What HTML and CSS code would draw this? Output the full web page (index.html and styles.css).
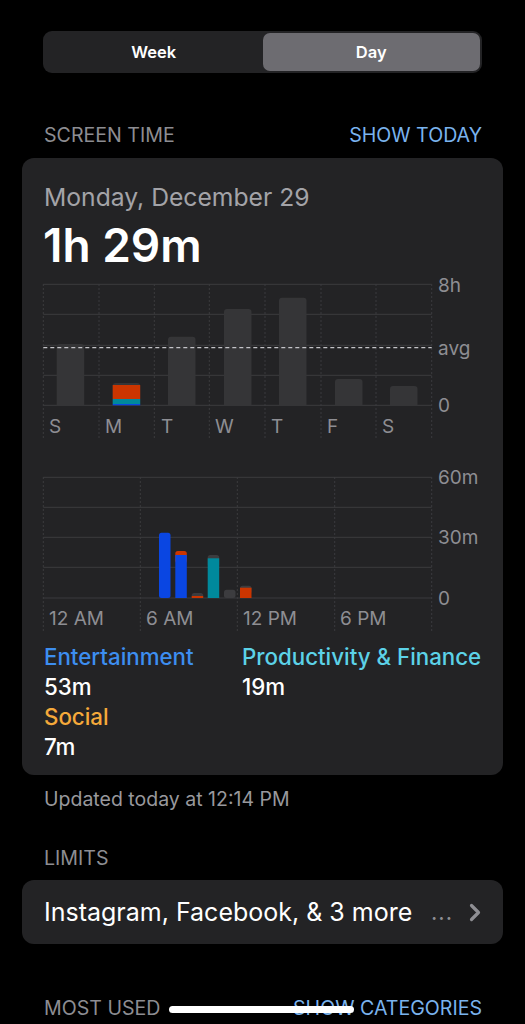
FILE: index.html
```html
<!DOCTYPE html>
<html lang="en">
<head>
  <meta charset="UTF-8">
  <title>Screen Time</title>
  <link rel="stylesheet" href="styles.css">
</head>
<body>

<div class="page">
  <div class="segmented">
    <div class="segment">Week</div>
    <div class="segment active">Day</div>
  </div>

  <div class="section-head">
    <span>SCREEN TIME</span>
    <span class="link">SHOW TODAY</span>
  </div>

  <div class="card">
    <div class="date">Monday, December 29</div>
    <div class="total">1h 29m</div>

    <svg class="chart week" width="481" height="170" viewBox="0 0 481 170">
      <g class="grid">
        <line x1="21.3" y1="14.3" x2="409.7" y2="14.3"/>
        <line x1="21.3" y1="44.3" x2="409.7" y2="44.3"/>
        <line x1="21.3" y1="75.3" x2="409.7" y2="75.3"/>
        <line x1="21.3" y1="105.3" x2="409.7" y2="105.3"/>
        <line x1="21.3" y1="135.3" x2="409.7" y2="135.3"/>
      </g>
      <g class="dots">
        <line x1="21.3" y1="14" x2="21.3" y2="168"/>
        <line x1="77" y1="14" x2="77" y2="168"/>
        <line x1="132.3" y1="14" x2="132.3" y2="168"/>
        <line x1="187.3" y1="14" x2="187.3" y2="168"/>
        <line x1="243" y1="14" x2="243" y2="168"/>
        <line x1="299" y1="14" x2="299" y2="168"/>
        <line x1="354" y1="14" x2="354" y2="168"/>
        <line x1="409.7" y1="14" x2="409.7" y2="168"/>
      </g>
      <g class="bars">
        <path d="M34.7 135.3 V77 a3 3 0 0 1 3 -3 h21.5 a3 3 0 0 1 3 3 V135.3 Z"/>
        <path d="M90.7 135.3 V116 a3 3 0 0 1 3 -3 h21.5 a3 3 0 0 1 3 3 V135.3 Z"/>
        <path d="M146 135.3 V69.7 a3 3 0 0 1 3 -3 h21.5 a3 3 0 0 1 3 3 V135.3 Z"/>
        <path d="M202 135.3 V42 a3 3 0 0 1 3 -3 h21.5 a3 3 0 0 1 3 3 V135.3 Z"/>
        <path d="M257 135.3 V30.7 a3 3 0 0 1 3 -3 h21.5 a3 3 0 0 1 3 3 V135.3 Z"/>
        <path d="M313 135.3 V112 a3 3 0 0 1 3 -3 h21.5 a3 3 0 0 1 3 3 V135.3 Z"/>
        <path d="M368 135.3 V119 a3 3 0 0 1 3 -3 h21.5 a3 3 0 0 1 3 3 V135.3 Z"/>
      </g>
      <rect class="red" x="90.7" y="115" width="27.5" height="14"/>
      <rect class="teal" x="90.7" y="129" width="27.5" height="5"/>
      <rect class="blue" x="90.7" y="134" width="27.5" height="1.3"/>
      <line class="avg" x1="21.3" y1="77.7" x2="409.7" y2="77.7"/>
      <g class="axis">
        <text x="416" y="22">8h</text>
        <text x="416" y="85">avg</text>
        <text x="416" y="142">0</text>
        <text x="27" y="163">S</text>
        <text x="83" y="163">M</text>
        <text x="139" y="163">T</text>
        <text x="193" y="163">W</text>
        <text x="249" y="163">T</text>
        <text x="305" y="163">F</text>
        <text x="360" y="163">S</text>
      </g>
    </svg>

    <svg class="chart day" width="481" height="170" viewBox="0 0 481 170">
      <g class="grid">
        <line x1="21.3" y1="12.3" x2="409.7" y2="12.3"/>
        <line x1="21.3" y1="42.3" x2="409.7" y2="42.3"/>
        <line x1="21.3" y1="72.3" x2="409.7" y2="72.3"/>
        <line x1="21.3" y1="102.3" x2="409.7" y2="102.3"/>
        <line x1="21.3" y1="133" x2="409.7" y2="133"/>
      </g>
      <g class="dots">
        <line x1="21.3" y1="12" x2="21.3" y2="168"/>
        <line x1="118.3" y1="12" x2="118.3" y2="168"/>
        <line x1="215.3" y1="12" x2="215.3" y2="168"/>
        <line x1="312.7" y1="12" x2="312.7" y2="168"/>
        <line x1="409.7" y1="12" x2="409.7" y2="168"/>
      </g>
      <!-- hourly bars, 07:00 to 12:00 -->
      <rect class="blue" x="137" y="67.7" width="11.5" height="65.3" rx="2.5"/>
      <rect class="red" x="153.3" y="86" width="11.5" height="12" rx="2.5"/>
      <rect class="blue" x="153.3" y="90" width="11.5" height="43"/>
      <rect class="gray" x="169.7" y="128" width="11.5" height="5" rx="2.5"/>
      <rect class="red" x="169.7" y="131" width="11.5" height="2"/>
      <rect class="gray" x="185.7" y="90" width="11.5" height="12" rx="2.5"/>
      <rect class="teal" x="185.7" y="93.3" width="11.5" height="39.7"/>
      <rect class="gray" x="202" y="124.7" width="11.5" height="8.3" rx="2.5"/>
      <rect class="gray" x="218" y="120.7" width="11.5" height="8" rx="2.5"/>
      <rect class="red" x="218" y="122.7" width="11.5" height="10.3"/>
      <g class="axis">
        <text x="416" y="19">60m</text>
        <text x="416" y="79">30m</text>
        <text x="416" y="140">0</text>
        <text x="27" y="160">12 AM</text>
        <text x="124" y="160">6 AM</text>
        <text x="221" y="160">12 PM</text>
        <text x="318" y="160">6 PM</text>
      </g>
    </svg>

    <div class="legend">
      <div>
        <div class="cat ent">Entertainment</div>
        <div class="amount">53m</div>
      </div>
      <div>
        <div class="cat prod">Productivity &amp; Finance</div>
        <div class="amount">19m</div>
      </div>
      <div>
        <div class="cat soc">Social</div>
        <div class="amount">7m</div>
      </div>
    </div>
  </div>

  <div class="updated">Updated today at 12:14 PM</div>

  <div class="section-head limits-head">
    <span>LIMITS</span>
  </div>

  <div class="row">
    <span class="row-text">Instagram, Facebook, &amp; 3 more</span>
    <span class="row-more">
      <span class="ellipsis">...</span>
      <svg width="12" height="19" viewBox="0 0 12 19"><path d="M2.5 2.5 L9.5 9.5 L2.5 16.5" fill="none" stroke="#8e8e93" stroke-width="3.2" stroke-linecap="round" stroke-linejoin="round"/></svg>
    </span>
  </div>

  <div class="section-head most-head">
    <span>MOST USED</span>
    <span class="link">SHOW CATEGORIES</span>
  </div>
</div>

<div class="home-bar"></div>

</body>
</html>
```

FILE: styles.css
```css
body {
  font-family: 'Inter', 'Liberation Sans', sans-serif;
  background-color: #000;
  margin: 0;
  padding: 0;
  color: #fff;
  overflow: hidden;
  height: 1024px;
}
.page {
  padding: 31px 22px 0;
}
.segmented {
  display: flex;
  margin: 0 21px 0 21px;
  height: 42px;
  padding: 2px;
  box-sizing: border-box;
  background-color: #232325;
  border-radius: 9px;
}
.segment {
  flex: 1;
  display: flex;
  align-items: center;
  justify-content: center;
  font-size: 16.5px;
  font-weight: 600;
  border-radius: 7px;
}
.segment.active {
  background-color: #6d6c71;
}
.section-head {
  display: flex;
  justify-content: space-between;
  margin: 50px 21px 0 22px;
  font-size: 19.6px;
  color: #8d8d92;
  height: 24px;
  line-height: 24px;
}
.section-head .link {
  color: #7ab3ee;
}
.card {
  margin-top: 11px;
  background-color: #232325;
  border-radius: 12px;
  padding: 24px 0 13px;
}
.date {
  padding-left: 22px;
  font-size: 24.7px;
  color: #a3a3a8;
  line-height: 30px;
}
.total {
  padding-left: 21px;
  font-size: 46px;
  font-weight: 600;
  line-height: 50px;
  margin-top: 8px;
}
.chart {
  display: block;
}
.chart.day {
  margin-top: 25px;
}
.grid line {
  stroke: #3b3b3e;
  stroke-width: 1;
}
.dots line {
  stroke: #3b3b3e;
  stroke-width: 1;
  stroke-dasharray: 2 2;
}
.bars path {
  fill: #353537;
}
.avg {
  stroke: #c4c4c8;
  stroke-width: 1.3;
  stroke-dasharray: 4 3;
}
.red { fill: #cb3500; }
.teal { fill: #00899c; }
.blue { fill: #0a46e2; }
.gray { fill: #3c3c3f; }
.axis text {
  font-family: 'Inter', 'Liberation Sans', sans-serif;
  font-size: 19px;
  fill: #8e8e93;
}
.legend {
  display: grid;
  grid-template-columns: 198px 1fr;
  padding: 7px 0 0 22px;
}
.cat {
  font-size: 22.3px;
  font-weight: 500;
  line-height: 30px;
}
.cat.ent { color: #3d8ef0; }
.cat.prod { color: #5cd2e8; }
.cat.soc { color: #f5a93a; }
.amount {
  font-size: 22.3px;
  font-weight: 500;
  line-height: 30px;
  color: #fff;
}
.updated {
  margin: 13px 0 0 22px;
  font-size: 19.5px;
  color: #98989d;
  line-height: 22px;
}
.limits-head {
  margin-top: 36px;
}
.row {
  margin-top: 10px;
  height: 64px;
  background-color: #232325;
  border-radius: 12px;
  display: flex;
  align-items: center;
  justify-content: space-between;
  padding: 0 22px;
}
.row-text {
  font-size: 25px;
}
.row-more {
  display: flex;
  align-items: center;
  gap: 16px;
}
.ellipsis {
  font-size: 22px;
  color: #8e8e93;
  letter-spacing: 1px;
}
.most-head {
  margin-top: 52px;
}
.home-bar {
  position: absolute;
  left: 169px;
  top: 1006px;
  width: 185px;
  height: 7px;
  border-radius: 4px;
  background-color: #fff;
}
```
